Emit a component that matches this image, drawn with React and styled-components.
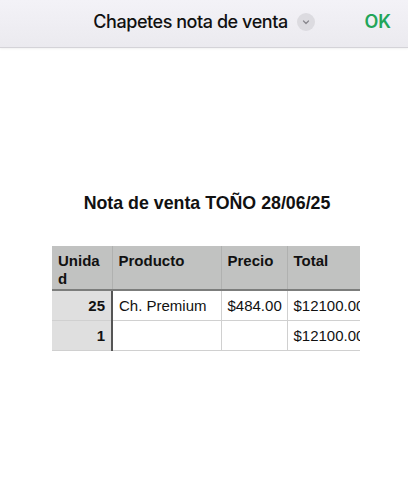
import React from "react";
import styled, { createGlobalStyle } from "styled-components";

const Global = createGlobalStyle`
  html, body { margin: 0; padding: 0; background: #fff; }
  body { font-family: "Liberation Sans", Arial, sans-serif; }
`;

const Page = styled.div`
  width: 408px;
  height: 500px;
  background: #fff;
  overflow: hidden;
  display: flex;
  flex-direction: column;
`;

const TopBar = styled.div`
  height: 48px;
  flex: none;
  background: linear-gradient(#f3f2f7, #ebeaef);
  border-bottom: 1px solid #d4d3d8;
  box-shadow: 0 1px 2px rgba(0,0,0,0.06);
  display: grid;
  grid-template-columns: 1fr auto 1fr;
  align-items: center;
  padding: 0 17px 4px;
  box-sizing: border-box;
`;

const TitleWrap = styled.div`
  grid-column: 2;
  display: flex;
  align-items: center;
  gap: 9px;
  margin-left: 0;
`;

const Title = styled.span`
  font-family: Inter, "Noto Sans", sans-serif;
  font-size: 18px;
  font-weight: 500;
  color: #111;
  letter-spacing: -0.45px;
`;

const Chevron = styled.span`
  width: 18px;
  height: 18px;
  border-radius: 50%;
  background: #dcdbe0;
  display: inline-flex;
  align-items: center;
  justify-content: center;
`;

const Ok = styled.span`
  grid-column: 3;
  justify-self: end;
  font-family: Inter, "Noto Sans", sans-serif;
  font-size: 18px;
  font-weight: 600;
  color: #22a559;
`;

const Content = styled.div`
  display: flex;
  flex-direction: column;
  align-items: center;
  padding-top: 145px;
`;

const DocTitle = styled.h1`
  margin: 0 0 0 6px;
  font-family: "Liberation Sans", Arial, sans-serif;
  font-size: 17.8px;
  font-weight: 700;
  color: #111;
`;

const TableClip = styled.div`
  margin-top: 32px;
  margin-left: 4px;
  width: 308px;
  overflow: hidden;
`;

const Table = styled.table`
  border-collapse: collapse;
  table-layout: fixed;
  width: 320px;
  font-family: "Liberation Sans", Arial, sans-serif;
  font-size: 15px;
  color: #111;
`;

const Th = styled.th`
  background: #c1c2c1;
  text-align: left;
  vertical-align: top;
  font-weight: 700;
  padding: 6px 6px 0;
  height: 44px;
  box-sizing: border-box;
  line-height: 18px;
  border-left: 1px solid #b0b1b0;
  border-bottom: 2px solid #7c7d7c;
  word-break: break-all;
  &:first-child { border-left: none; }
`;

const Td = styled.td`
  height: 30px;
  padding: 0 6px;
  box-sizing: border-box;
  border: 1px solid #d0d0d0;
  border-top: none;
  background: ${(p) => (p.$key ? "#dfdfdf" : "#fff")};
  text-align: ${(p) => (p.$key ? "right" : "left")};
  font-weight: ${(p) => (p.$key ? 700 : 400)};
  white-space: nowrap;
  overflow: hidden;
  ${(p) => p.$key && "border-left: none; border-right: 2px solid #555;"}
`;

const rows = [
  { u: "25", p: "Ch. Premium", pr: "$484.00", t: "$12100.00" },
  { u: "1", p: "", pr: "", t: "$12100.00" },
];

export default function App() {
  return (
    <Page>
      <Global />
      <TopBar>
        <TitleWrap>
          <Title>Chapetes nota de venta</Title>
          <Chevron>
            <svg width="10" height="10" viewBox="0 0 10 10">
              <path d="M2.5 4 L5 6.5 L7.5 4" fill="none" stroke="#8a898f" strokeWidth="1.3" strokeLinecap="round" strokeLinejoin="round" />
            </svg>
          </Chevron>
        </TitleWrap>
        <Ok>OK</Ok>
      </TopBar>
      <Content>
        <DocTitle>Nota de venta TOÑO 28/06/25</DocTitle>
        <TableClip>
          <Table>
            <colgroup>
              <col style={{ width: 60 }} />
              <col style={{ width: 109 }} />
              <col style={{ width: 66 }} />
              <col style={{ width: 85 }} />
            </colgroup>
            <thead>
              <tr>
                <Th>Unidad</Th>
                <Th>Producto</Th>
                <Th>Precio</Th>
                <Th>Total</Th>
              </tr>
            </thead>
            <tbody>
              {rows.map((r, i) => (
                <tr key={i}>
                  <Td $key>{r.u}</Td>
                  <Td>{r.p}</Td>
                  <Td>{r.pr}</Td>
                  <Td>{r.t}</Td>
                </tr>
              ))}
            </tbody>
          </Table>
        </TableClip>
      </Content>
    </Page>
  );
}
